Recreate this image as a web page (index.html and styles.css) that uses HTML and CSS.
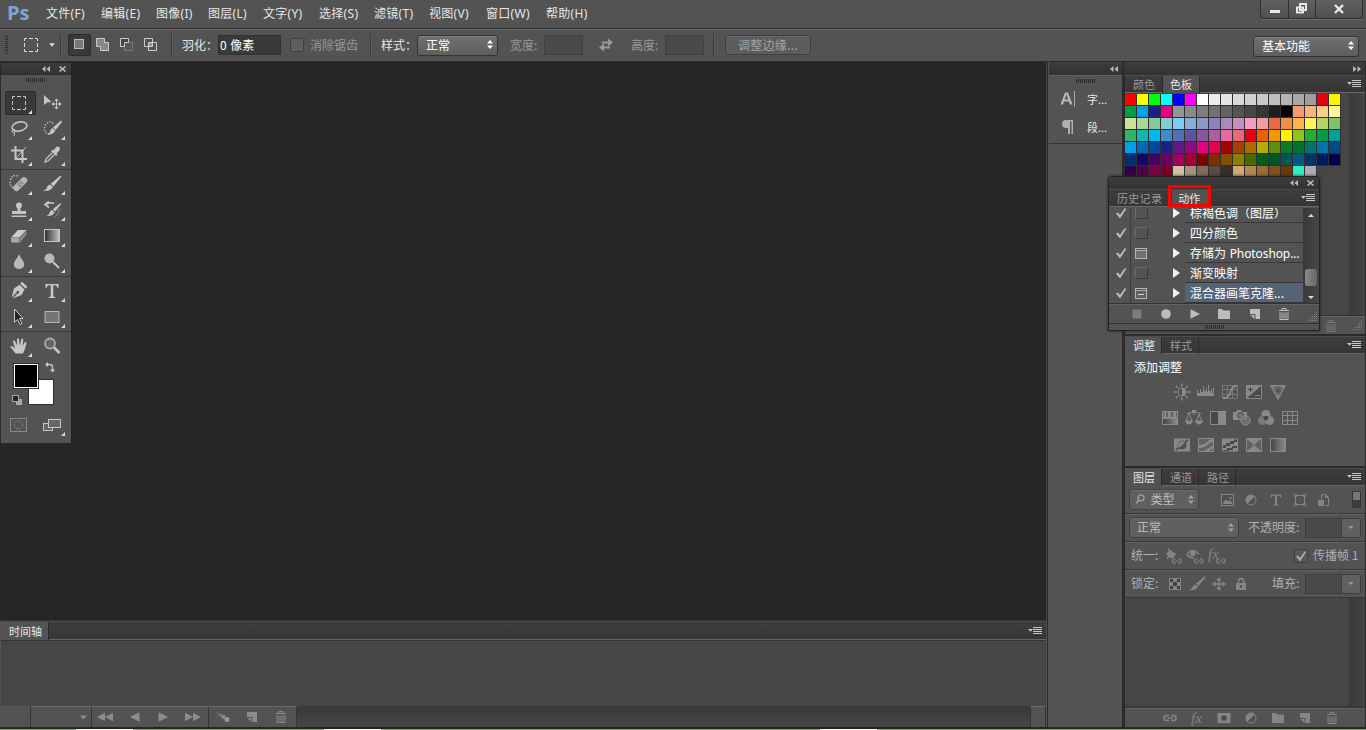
FILE: index.html
```html
<!DOCTYPE html>
<html lang="zh-CN">
<head>
    <meta charset="UTF-8">
    <meta name="viewport" content="width=device-width, initial-scale=1.0">
    <title>Photoshop</title>
    <link rel="stylesheet" href="styles.css">
</head>
<body>
    <!-- 图标 -->
    <svg class="defs" width="0" height="0">
        <defs>
            <linearGradient id="gradH"><stop offset="0" stop-color="#2c2c2c"/><stop offset="1" stop-color="#c4c4c4"/></linearGradient>
            <linearGradient id="gradDim"><stop offset="0" stop-color="#444"/><stop offset="1" stop-color="#8c8c8c"/></linearGradient>
            <radialGradient id="gradR" cy=".35"><stop offset="0" stop-color="#4c4c4c"/><stop offset="1" stop-color="#8c8c8c"/></radialGradient>
        </defs>
        <!-- 工具 -->
        <symbol id="marquee" viewBox="0 0 20 20"><path d="M3.500 6V3.500H6M8 3.500h4M14 3.500h2.500V6M16.500 8v4M16.500 14v2.500H14M12 16.500H8M6 16.500H3.500V14M3.500 12V8" fill="none" stroke="currentColor"/></symbol>
        <symbol id="move" viewBox="0 0 20 20"><path d="M2 2v10l3-2.500L9.500 9z" fill="currentColor"/><path d="M14.500 6.500v9M10 11h9" stroke="currentColor"/><path d="M14.500 5.500l2.200 2.500h-4.400zM14.500 16.500l2.200-2.500h-4.400zM9.500 11l2.500-2.200v4.400zM19.500 11L17 8.800v4.400z" fill="currentColor"/></symbol>
        <symbol id="lasso" viewBox="0 0 20 20"><ellipse cx="10.500" cy="7.500" rx="7.500" ry="4.500" transform="rotate(-12 10.500 7.500)" fill="none" stroke="currentColor" stroke-width="1.600"/><circle cx="4.500" cy="12" r="1.600" fill="none" stroke="currentColor"/><path d="M5 13.500q1.500 1.500-.5 3.500" fill="none" stroke="currentColor"/></symbol>
        <symbol id="quicksel" viewBox="0 0 20 20"><path d="M11 4.500Q9 2 6 3.500 2.500 5.500 2.500 9.500T6 15h2" fill="none" stroke="currentColor" stroke-width="1.300" stroke-dasharray="1.300 1.500"/><path d="M19 1.500L11 8.500l2.500 2.500 6.500-8zM10.500 9l2.800 2.800q-2.500 4.500-8.300 3.500 3-.5 3.300-3.500.7-2.300 2.200-2.800z" fill="currentColor"/></symbol>
        <symbol id="crop" viewBox="0 0 20 20"><path d="M6.500 1v13H18M2 5.500h11.500V18" fill="none" stroke="currentColor" stroke-width="2"/><path d="M6.500 14L17 2" stroke="currentColor"/></symbol>
        <symbol id="dropper" viewBox="0 0 20 20"><path d="M10 8L4 14l-1 3 3-1 6-6" fill="none" stroke="currentColor" stroke-width="1.300"/><path d="M9 6l5 5 1.500-1.500-1-1L17 6q2-3-.5-4.200Q14.500 1 13 3.500L11.500 5.500l-1-1z" fill="currentColor"/></symbol>
        <symbol id="heal" viewBox="0 0 20 20"><path d="M9 2Q3 0 1.500 6t3 8" fill="none" stroke="currentColor" stroke-width="1.400" stroke-dasharray="1.400 1.400"/><rect x="2.500" y="7" width="17" height="6.500" rx="3" transform="rotate(-45 11 10)" fill="#b4b4b4"/><path d="M8 9.500l4 4M11 6.500l4 4" stroke="#7a7a7a"/><path d="M9.500 9.800h1M12 9.800h1M10.700 11.500h1M10.700 8h1" stroke="#555"/></symbol>
        <symbol id="brush" viewBox="0 0 20 20"><path d="M18.500 1.500L8.800 9.800l2.600 2.600 8-9.700zM8.200 10.500l2.800 2.700q-3.500 4.800-10 3.300 3.500-.8 4-3.500 1-2.200 3.200-2.500z" fill="currentColor"/></symbol>
        <symbol id="stamp" viewBox="0 0 20 20"><path d="M7 5.500a3 3 0 1 1 6 0q0 1.500-1.500 3V11H17v3H3v-3h5.500V8.500Q7 7 7 5.500zM2.500 15.500h15V17h-15z" fill="currentColor"/></symbol>
        <symbol id="history" viewBox="0 0 20 20"><path d="M18.500 3L10.800 9.200l2.400 2.400 6-7.500zM10.200 10l2.500 2.500q-3 4.400-8.200 3.400 2.500-.8 3-3.200 1-2.400 2.700-2.700z" fill="currentColor"/><path d="M4 4.500q4-3 8-1M7 1.500l-4 3 4 3" fill="none" stroke="currentColor" stroke-width="1.600"/><path d="M16.500 9q1 3-.5 5-1.500 2-4 2.500" fill="none" stroke="currentColor" stroke-dasharray="1.200 1.200"/></symbol>
        <symbol id="eraser" viewBox="0 0 20 20"><path d="M2 11.500L9 4h8.500l-7 7.500z" fill="#ccc"/><path d="M2 12h8.500v4.500H3.500Q2 16.500 2 15z" fill="#a8a8a8"/><path d="M11 12l6.500-7v3.500l-6.500 8z" fill="#8a8a8a"/></symbol>
        <symbol id="gradient" viewBox="0 0 20 20"><rect x="2.500" y="3.500" width="15" height="12" fill="url(#gradH)" stroke="currentColor"/></symbol>
        <symbol id="drop" viewBox="0 0 20 20"><path d="M10 2q1 3 3.500 6t1.500 6q-1.500 3-5 3t-5-3q-1-3 1.500-6T10 2z" fill="#b8b8b8"/></symbol>
        <symbol id="dodge" viewBox="0 0 20 20"><circle cx="7.500" cy="6.500" r="5" fill="#b8b8b8"/><path d="M11 10l6 6" stroke="currentColor" stroke-width="2"/></symbol>
        <symbol id="pen" viewBox="0 0 20 20"><path d="M13 .8l5.500 5-1.800 2-5.500-5zM10.500 3.800l5 4.700-3 5.500L3.500 17.500l5-5a1.400 1.400 0 1 0-1-1L2.500 16.500 5 7.500z" fill="currentColor"/></symbol>
        <symbol id="type" viewBox="0 0 20 20"><path d="M3.500 3h13v4h-1q-.3-2.700-2.500-2.700h-1.700V15q0 1 2 1v1H6.700v-1q2 0 2-1V4.300H7Q4.800 4.300 4.500 7h-1z" fill="currentColor"/></symbol>
        <symbol id="select" viewBox="0 0 20 20"><path d="M5.500 2v13l3-2.500 2.500 5 2-1-2.500-5H14z" fill="#262626" stroke="currentColor"/></symbol>
        <symbol id="rect" viewBox="0 0 20 20"><rect x="3" y="4.500" width="14" height="11" fill="#757575" stroke="#b5b5b5"/></symbol>
        <symbol id="hand" viewBox="0 0 20 20"><path d="M6.500 17.500L1.500 11Q1.500 9.500 3 10l3 2.500L4 5q.5-1.500 1.800-.2L8 9.500 8 3q1-1.500 2 0l.5 6.500L12.500 3q1.500-1 1.800.5L13.500 10 16 6q1.500-.5 1.500 1L16 13l-2 4.500z" fill="currentColor"/></symbol>
        <symbol id="zoomtool" viewBox="0 0 20 20"><circle cx="8" cy="7.500" r="5" fill="#666" stroke="#aaa" stroke-width="1.800"/><path d="M12 11.500l5.500 5.500" stroke="currentColor" stroke-width="2.600"/></symbol>
        <symbol id="quickmask" viewBox="0 0 20 20"><rect x="1.500" y="3.500" width="16" height="13" fill="none" stroke="#888"/><circle cx="9.500" cy="10" r="4" fill="none" stroke="#aaa" stroke-dasharray="1 1.400"/></symbol>
        <symbol id="screen" viewBox="0 0 20 20"><rect x="1.500" y="8.500" width="9" height="7" fill="#666" stroke="currentColor"/><rect x="6.500" y="4.500" width="12" height="8" fill="#666" stroke="currentColor"/></symbol>
        <symbol id="swapcolor" viewBox="0 0 12 12"><path d="M3 3.500h3Q8.500 3.500 8.500 6v3" fill="none" stroke="currentColor" stroke-width="1.300"/><path d="M1 3.500L4 .8v5.400zM8.500 11.500L5.800 8.500h5.400z" fill="currentColor"/></symbol>
        <!-- 选项栏 -->
        <symbol id="selnew" viewBox="0 0 14 14"><rect x="1.500" y=".5" width="9" height="9" fill="#777" stroke="#bbb"/></symbol>
        <symbol id="seladd" viewBox="0 0 14 14"><path d="M.5.500h8v4h4v8h-8v-4h-4z" fill="#888" stroke="#ccc"/></symbol>
        <symbol id="selsub" viewBox="0 0 14 14"><rect x="4.500" y="4.500" width="8" height="8" fill="#555" stroke="#777"/><path d="M.5.500h8v4h-4v4h-4z" fill="#444" stroke="#ccc"/></symbol>
        <symbol id="selint" viewBox="0 0 14 14"><path d="M.5.500h8v8h-8zM4.500 4.500h8v8h-8z" fill="none" stroke="#ccc"/><path d="M5 5h3v3H5z" fill="#999"/></symbol>
        <symbol id="swap" viewBox="0 0 14 14"><path d="M3 3.500h6V.5l5 4L9 8.500v-3H3zM11 8.500H5v-3L0 9.500l5 4v-3h6z" fill="currentColor"/></symbol>
        <symbol id="updown" viewBox="0 0 6 9"><path d="M3 0l3 3.500H0zM3 9l3-3.500H0z" fill="currentColor"/></symbol>
        <symbol id="down" viewBox="0 0 7 4"><path d="M0 0h7L3.500 4z" fill="currentColor"/></symbol>
        <symbol id="left2" viewBox="0 0 8 6"><path d="M3.500 0v6L0 3zM8 0v6L4.500 3z" fill="currentColor"/></symbol>
        <symbol id="right2" viewBox="0 0 8 6"><path d="M0 0v6l3.500-3zM4.500 0v6L8 3z" fill="currentColor"/></symbol>
        <symbol id="close" viewBox="0 0 7 6"><path d="M.5.500l6 5M6.500.500l-6 5" stroke="currentColor" stroke-width="1.600"/></symbol>
        <symbol id="menu" viewBox="0 0 14 8"><path d="M0 2h5L2.500 4.800z" fill="currentColor"/><path d="M5 .5h9M5 2.500h9M5 4.500h9M5 6.500h9" stroke="currentColor"/></symbol>
        <symbol id="resize" viewBox="0 0 10 10"><path d="M8 0h1v1H8zM6 2h1v1H6zM8 2h1v1H8zM4 4h1v1H4zM6 4h1v1H6zM8 4h1v1H8zM2 6h1v1H2zM4 6h1v1H4zM6 6h1v1H6zM8 6h1v1H8zM0 8h1v1H0zM2 8h1v1H2zM4 8h1v1H4zM6 8h1v1H6zM8 8h1v1H8z" fill="#858585"/></symbol>
        <!-- 面板 -->
        <symbol id="charpanel" viewBox="0 0 16 18"><path d="M.5 14.500L5 2.500h3l4.500 12h-2.600l-1-3H4l-1 3zM4.700 9.500h3.500L6.500 4.500z" fill="#b8b8b8"/><path d="M14.500 1v16" stroke="#aaa"/></symbol>
        <symbol id="parapanel" viewBox="0 0 16 18"><path d="M6 2h7v14h-1.500V3.500H10V16H8V10H6Q2 10 2 6t4-4z" fill="#b0b0b0"/></symbol>
        <symbol id="folder" viewBox="0 0 14 12"><path d="M1 1h4l1 1.500h7V11H1z" fill="currentColor"/></symbol>
        <symbol id="newitem" viewBox="0 0 14 12"><path d="M2 1h10v10H7.500V6H2zM2.500 7h4v4z" fill="currentColor"/></symbol>
        <symbol id="trash" viewBox="0 0 14 12"><path d="M2 2.500h10M5 2V.5h4V2M3 4v7.500h8V4M5 4.500v6M7 4.500v6M9 4.500v6" fill="none" stroke="currentColor"/></symbol>
        <symbol id="stop" viewBox="0 0 14 12"><path d="M2.500 1.500h9v9h-9z" fill="#7c7c7c"/></symbol>
        <symbol id="record" viewBox="0 0 14 12"><circle cx="7" cy="6" r="4.800" fill="currentColor"/></symbol>
        <symbol id="play" viewBox="0 0 14 12"><path d="M2.500 1.200L12 6l-9.500 4.800z" fill="currentColor"/></symbol>
        <symbol id="back" viewBox="0 0 14 12"><path d="M11.500 1.200L2 6l9.500 4.800z" fill="currentColor"/></symbol>
        <symbol id="first" viewBox="0 0 16 12"><path d="M8 1.800v8.400L0 6zM16 1.800v8.400L8 6z" fill="currentColor"/></symbol>
        <symbol id="last" viewBox="0 0 16 12"><path d="M0 1.800v8.400L8 6zM8 1.800v8.400L16 6z" fill="currentColor"/></symbol>
        <symbol id="tween" viewBox="0 0 14 12"><circle cx="2" cy="2.500" r="1.500" fill="#666"/><circle cx="4.500" cy="4" r="1.800" fill="#777"/><circle cx="7.500" cy="6" r="2.200" fill="#888"/><circle cx="11" cy="8.500" r="2.500" fill="#999"/></symbol>
        <symbol id="check" viewBox="0 0 12 12"><path d="M1 6.500l2-1 2 2.500L9.500 1.500h2L5.300 11H4.500z" fill="currentColor"/></symbol>
        <symbol id="tri" viewBox="0 0 7 10"><path d="M0 0l7 5-7 5z" fill="#f0f0f0"/></symbol>
        <!-- 调整 -->
        <symbol id="sun" viewBox="0 0 18 18"><path d="M9 .5v3M9 14.500v3M.5 9h3M14.500 9h3M3 3l2 2M13 13l2 2M15 3l-2 2M5 13l-2 2" stroke="currentColor" stroke-width="1.600"/><circle cx="9" cy="9" r="4" fill="#4d4d4d" stroke="currentColor"/><path d="M9 5a4 4 0 0 1 0 8z" fill="currentColor"/></symbol>
        <symbol id="levels" viewBox="0 0 18 18"><path d="M0 13V7h1v3h2V6h1v3h2V3h1v5h2V5h1v4h1V2h1v6h2V6h1v4h1V5h1v8z" fill="currentColor"/></symbol>
        <symbol id="curves" viewBox="0 0 18 18"><path d="M1.500 2.500h15v13h-15zM6.500 2.500v13M11.500 2.500v13M1.500 6.500h15M1.500 11.500h15" fill="none" stroke="#777"/><path d="M2 15q6 0 7.500-6T16 3" fill="none" stroke="#999" stroke-width="1.300"/></symbol>
        <symbol id="exposure" viewBox="0 0 18 18"><rect x="1.500" y="2.500" width="15" height="13" fill="#4a4a4a" stroke="currentColor"/><path d="M1.500 15.500v-13h15z" fill="currentColor"/><path d="M5.500 4v5M3 6.500h5" stroke="#444"/><path d="M10 12.500h5" stroke="currentColor"/></symbol>
        <symbol id="vibrance" viewBox="0 0 18 18"><path d="M1.500 2.500h15L9 16.500z" fill="url(#gradR)" stroke="currentColor"/></symbol>
        <symbol id="huesat" viewBox="0 0 18 18"><rect x="1.500" y="2.500" width="15" height="13" fill="#606060" stroke="currentColor"/><path d="M3 3h2v5H3zM7 3h3v5H7zM12 3h3v5h-3zM2 8h14v2H2z" fill="currentColor"/><path d="M2 10h14v5H2z" fill="url(#gradDim)"/></symbol>
        <symbol id="balance" viewBox="0 0 18 18"><path d="M9 1v5M2 4.500q7-3 14 0M4 4l-3 8M4 4l3 8M14 5l-3 8M14 5l3 8" fill="none" stroke="currentColor"/><path d="M0 11.500h8q-1 4-4 4t-4-4zM10 11.500h8q-1 4-4 4t-4-4zM7 1h4v3H7z" fill="currentColor"/></symbol>
        <symbol id="bw" viewBox="0 0 18 18"><rect x="1.500" y="2.500" width="15" height="13" fill="#484848" stroke="currentColor"/><path d="M9 3h7v12H9z" fill="currentColor"/></symbol>
        <symbol id="photo" viewBox="0 0 18 18"><path d="M0 3h3l1-2h4l1 2h5v8H0z" fill="currentColor"/><circle cx="7.500" cy="6.500" r="2.800" fill="#777" stroke="#454545"/><circle cx="12.500" cy="11.500" r="4.700" fill="#777" fill-opacity=".8" stroke="#909090"/></symbol>
        <symbol id="mixer" viewBox="0 0 18 18"><circle cx="9" cy="5.500" r="4.500" fill="#888"/><circle cx="5.500" cy="11.500" r="4.500" fill="#787878"/><circle cx="12.500" cy="11.500" r="4.500" fill="#888"/><path d="M6 7.500q3-1 6 0-1 3-3 4.500-2-1.500-3-4.500z" fill="#444"/></symbol>
        <symbol id="lookup" viewBox="0 0 18 18"><path d="M1.500 2.500h15v13h-15zM6.500 2.500v13M11.500 2.500v13M1.500 6.500h15M1.500 11.500h15" fill="none" stroke="currentColor"/></symbol>
        <symbol id="invert" viewBox="0 0 18 18"><rect x="1" y="2.500" width="16" height="13" fill="currentColor"/><path d="M3 14L15 4" stroke="#505050" stroke-width="2"/><circle cx="9" cy="9" r="4.500" fill="#505050"/><path d="M6 12a4 4 0 0 1 6-5.500z" fill="#858585"/></symbol>
        <symbol id="poster" viewBox="0 0 18 18"><rect x="1.500" y="2.500" width="15" height="13" fill="#626262" stroke="currentColor"/><path d="M2 9q5 0 8-3t6-3v3q-3 0-6 3t-8 3zM6 15q4-1 6-3t4-2v3q-2 0-4 2z" fill="currentColor"/></symbol>
        <symbol id="threshold" viewBox="0 0 18 18"><rect x="1" y="2.500" width="16" height="13" fill="currentColor"/><path d="M2 9h3V7h4V5h4V3.500h3V6h-3v2H9v2H5v2H2zM2 14h4v-2h5v-2h5v2h-4v2H8v1H2z" fill="#484848"/></symbol>
        <symbol id="selcolor" viewBox="0 0 18 18"><rect x="1.500" y="2.500" width="15" height="13" fill="#606060" stroke="currentColor"/><path d="M2 3h14L9 9zM2 15h14L9 9z" fill="#888"/></symbol>
        <symbol id="gradmap" viewBox="0 0 18 18"><rect x="1.500" y="2.500" width="15" height="13" fill="url(#gradDim)" stroke="currentColor"/></symbol>
        <!-- 图层 -->
        <symbol id="search" viewBox="0 0 10 10"><circle cx="6" cy="3.800" r="3" fill="none" stroke="currentColor" stroke-width="1.300"/><path d="M4 6L1 9.500" stroke="currentColor" stroke-width="1.500"/></symbol>
        <symbol id="picture" viewBox="0 0 14 14"><rect x=".5" y="1.500" width="12" height="11" fill="#4e4e4e" stroke="currentColor"/><path d="M2 10l3-3.500L7 8.500l2-1.500 2.500 3v1H2zM8.500 4h2v2h-2z" fill="currentColor"/></symbol>
        <symbol id="adj" viewBox="0 0 14 14"><circle cx="7" cy="7" r="5" fill="#505050" stroke="currentColor"/><path d="M3.300 10.700A5.200 5.200 0 0 1 10.700 3.300z" fill="currentColor"/></symbol>
        <symbol id="shape" viewBox="0 0 14 14"><path d="M3 2.500h8M3 11.500h8M2.500 3v9M11.500 3v9" stroke="currentColor"/><path d="M1.500 1.500h2v2h-2zM10.500 1.500h2v2h-2zM1.500 10.500h2v2h-2zM10.500 10.500h2v2h-2z" fill="#535353" stroke="currentColor"/></symbol>
        <symbol id="smart" viewBox="0 0 14 14"><path d="M4.500 6.500v-5h4l3 3v8H8" fill="none" stroke="currentColor"/><path d="M8 1v4h4M1 7h6v6H1z" fill="currentColor"/></symbol>
        <symbol id="pin" viewBox="0 0 18 18"><path d="M4 1l6 5 2 0-1 3-3 3-2-2-4 3 2-4.500-2.500-2 3-1.500z" fill="currentColor"/><path d="M12 12h-1.500a2 2 0 0 0 0 4H12M14 12h1a2 2 0 0 1 0 4h-1M11 14h4" fill="none" stroke="currentColor" stroke-width="1.200"/></symbol>
        <symbol id="eye" viewBox="0 0 18 18"><path d="M1 7.500Q6.500-.5 13 7.500M1 7.500q3 4 7 3.500" fill="none" stroke="currentColor" stroke-width="1.400"/><circle cx="7" cy="6.500" r="2.700" fill="currentColor"/><path d="M12 12h-1.500a2 2 0 0 0 0 4H12M14 12h1a2 2 0 0 1 0 4h-1M11 14h4" fill="none" stroke="currentColor" stroke-width="1.200"/></symbol>
        <symbol id="chainlet" viewBox="0 0 18 18"><path d="M12 12h-1.500a2 2 0 0 0 0 4H12M14 12h1a2 2 0 0 1 0 4h-1M11 14h4" fill="none" stroke="currentColor" stroke-width="1.200"/></symbol>
        <symbol id="checker" viewBox="0 0 14 14"><rect x="1.500" y="1.500" width="11" height="11" fill="#3f3f3f" stroke="currentColor"/><path d="M5 2h4v3H5zM2 5h3v4H2zM9 5h3v4H9zM5 9h4v3H5z" fill="currentColor"/></symbol>
        <symbol id="cross" viewBox="0 0 14 14"><path d="M7 2v10M2 7h10" stroke="currentColor" stroke-width="1.300"/><path d="M7 0l2.800 3.500H4.200zM7 14l2.800-3.500H4.200zM0 7l3.500-2.800v5.600zM14 7l-3.500-2.800v5.600z" fill="currentColor"/></symbol>
        <symbol id="lock" viewBox="0 0 14 14"><path d="M4.500 6V4a2.500 2.500 0 0 1 5 0v2" fill="none" stroke="currentColor" stroke-width="1.500"/><path d="M2 6h10v7H2z" fill="currentColor"/><path d="M6.300 8h1.400v3H6.300z" fill="#444"/></symbol>
        <symbol id="link" viewBox="0 0 14 12"><path d="M6 3.500H3.500a2.500 2.500 0 0 0 0 5H6M8 3.500h2.500a2.500 2.500 0 0 1 0 5H8M4 6h6" fill="none" stroke="currentColor" stroke-width="1.600"/></symbol>
        <symbol id="mask" viewBox="0 0 14 12"><path d="M.5 1h13v10H.5z" fill="currentColor"/><circle cx="7" cy="6" r="2.700" fill="#4a4a4a"/></symbol>
    </svg>

    <div class="app">
        <header class="menubar">
            <div class="logo">Ps</div>
            <nav class="menus">
                <span>文件(F)</span>
                <span>编辑(E)</span>
                <span>图像(I)</span>
                <span>图层(L)</span>
                <span>文字(Y)</span>
                <span>选择(S)</span>
                <span>滤镜(T)</span>
                <span>视图(V)</span>
                <span>窗口(W)</span>
                <span>帮助(H)</span>
            </nav>
            <div class="winbtns">
                <div class="winbtn"><svg width="12" height="12"><path d="M1 9h10v3H1z" fill="#e8e8e8"/></svg></div>
                <div class="winbtn"><svg width="14" height="12"><path d="M5 1h6v6H5zM2 4.500h6v5H2z" fill="#555" stroke="#e8e8e8" stroke-width="2"/></svg></div>
                <div class="winbtn winbtn-close"><svg width="12" height="10"><path d="M2 1l8 8M10 1L2 9" stroke="#e8e8e8" stroke-width="2.400"/></svg></div>
            </div>
        </header>

        <div class="options">
            <span class="vgrip"></span>
            <svg class="light" width="20" height="20"><use href="#marquee"/></svg>
            <svg class="light" width="6" height="4"><use href="#down"/></svg>
            <span class="divider"></span>
            <div class="selmodes">
                <span class="mode pressed"><svg width="14" height="14"><use href="#selnew"/></svg></span>
                <svg width="14" height="14"><use href="#seladd"/></svg>
                <svg width="14" height="14"><use href="#selsub"/></svg>
                <svg width="14" height="14"><use href="#selint"/></svg>
            </div>
            <span class="divider"></span>
            <span class="label">羽化：</span>
            <span class="input feather">0 像素</span>
            <span class="checkbox"></span>
            <span class="label off">消除锯齿</span>
            <span class="divider"></span>
            <span class="label">样式：</span>
            <span class="dropdown style-select">正常<svg width="6" height="9"><use href="#updown"/></svg></span>
            <span class="label off">宽度:</span>
            <span class="input off"></span>
            <svg class="off" width="14" height="14"><use href="#swap"/></svg>
            <span class="label off">高度:</span>
            <span class="input off"></span>
            <span class="divider"></span>
            <span class="refine">调整边缘...</span>
            <span class="dropdown workspace">基本功能<svg width="6" height="9"><use href="#updown"/></svg></span>
        </div>

        <main class="main">
            <div class="center">
                <div class="canvas"></div>
                <section class="timeline">
                    <div class="tabs">
                        <span class="tab active">时间轴</span>
                        <svg class="panel-menu" width="14" height="8"><use href="#menu"/></svg>
                    </div>
                    <div class="timeline-body"></div>
                    <div class="timeline-bar">
                        <div class="tl-cell tl-blank"></div>
                        <div class="tl-cell tl-loop"><svg width="7" height="5"><use href="#down"/></svg></div>
                        <div class="tl-cell tl-play">
                            <svg width="16" height="12"><use href="#first"/></svg>
                            <svg width="14" height="12"><use href="#back"/></svg>
                            <svg width="14" height="12"><use href="#play"/></svg>
                            <svg width="16" height="12"><use href="#last"/></svg>
                        </div>
                        <div class="tl-cell tl-tools">
                            <svg width="14" height="12"><use href="#tween"/></svg>
                            <svg width="14" height="12"><use href="#newitem"/></svg>
                            <svg width="14" height="12"><use href="#trash"/></svg>
                        </div>
                        <div class="tl-scroll"></div>
                        <div class="tl-cell tl-end"></div>
                    </div>
                </section>
            </div>

            <aside class="dock">
                <div class="dock-head"><svg width="8" height="6"><use href="#left2"/></svg></div>
                <div class="dock-group">
                    <span class="grip"></span>
                    <div class="dock-item"><svg width="16" height="18"><use href="#charpanel"/></svg><span>字...</span></div>
                    <div class="dock-item"><svg width="16" height="18"><use href="#parapanel"/></svg><span>段...</span></div>
                </div>
            </aside>

            <aside class="panels">
                <div class="dock-head"><svg width="8" height="6"><use href="#right2"/></svg></div>

                <section class="panel swatch-panel">
                    <div class="tabs">
                        <span class="tab">颜色</span>
                        <span class="tab active">色板</span>
                        <svg class="panel-menu" width="14" height="8"><use href="#menu"/></svg>
                    </div>
                    <div class="swatch-body">
                        <div class="swatches" id="swatches"></div>
                        <div class="scroll"></div>
                    </div>
                    <div class="swatch-foot">
                        <svg width="14" height="12"><use href="#trash"/></svg>
                        <svg width="10" height="10"><use href="#resize"/></svg>
                    </div>
                </section>

                <section class="panel adjust-panel">
                    <div class="tabs">
                        <span class="tab active">调整</span>
                        <span class="tab">样式</span>
                        <svg class="panel-menu" width="14" height="8"><use href="#menu"/></svg>
                    </div>
                    <div class="adjust-body">
                        <div class="adjust-title">添加调整</div>
                        <div class="adjust-row row1">
                            <svg><use href="#sun"/></svg><svg><use href="#levels"/></svg><svg><use href="#curves"/></svg><svg><use href="#exposure"/></svg><svg><use href="#vibrance"/></svg>
                        </div>
                        <div class="adjust-row row2">
                            <svg><use href="#huesat"/></svg><svg><use href="#balance"/></svg><svg><use href="#bw"/></svg><svg><use href="#photo"/></svg><svg><use href="#mixer"/></svg><svg><use href="#lookup"/></svg>
                        </div>
                        <div class="adjust-row row3">
                            <svg><use href="#invert"/></svg><svg><use href="#poster"/></svg><svg><use href="#threshold"/></svg><svg><use href="#selcolor"/></svg><svg><use href="#gradmap"/></svg>
                        </div>
                    </div>
                </section>

                <section class="panel layers-panel">
                    <div class="tabs">
                        <span class="tab active">图层</span>
                        <span class="tab">通道</span>
                        <span class="tab">路径</span>
                        <svg class="panel-menu" width="14" height="8"><use href="#menu"/></svg>
                    </div>
                    <div class="lrow filter-row">
                        <span class="dropdown off"><svg class="lead" width="10" height="10"><use href="#search"/></svg>类型<svg width="6" height="9"><use href="#updown"/></svg></span>
                        <svg width="14" height="14"><use href="#picture"/></svg>
                        <svg width="14" height="14"><use href="#adj"/></svg>
                        <svg width="16" height="16"><use href="#type"/></svg>
                        <svg width="14" height="14"><use href="#shape"/></svg>
                        <svg width="14" height="14"><use href="#smart"/></svg>
                        <span class="switch"></span>
                    </div>
                    <div class="lrow blend-row">
                        <span class="dropdown off">正常<svg width="6" height="9"><use href="#updown"/></svg></span>
                        <span class="label">不透明度:</span>
                        <span class="combo"><i></i><b><svg width="6" height="3"><use href="#down"/></svg></b></span>
                    </div>
                    <div class="lrow unify-row">
                        <span class="label">统一:</span>
                        <svg width="18" height="18"><use href="#pin"/></svg>
                        <svg width="18" height="18"><use href="#eye"/></svg>
                        <span class="fxlink"><em>fx</em><svg width="18" height="18"><use href="#chainlet"/></svg></span>
                        <span class="checkbox"><svg width="12" height="12"><use href="#check"/></svg></span>
                        <span class="label">传播帧 1</span>
                    </div>
                    <div class="lrow lock-row">
                        <span class="label">锁定:</span>
                        <svg width="14" height="14"><use href="#checker"/></svg>
                        <svg width="18" height="18"><use href="#brush"/></svg>
                        <svg width="14" height="14"><use href="#cross"/></svg>
                        <svg width="14" height="14"><use href="#lock"/></svg>
                        <span class="label">填充:</span>
                        <span class="combo"><i></i><b><svg width="6" height="3"><use href="#down"/></svg></b></span>
                    </div>
                    <div class="layer-list">
                        <div class="scroll"></div>
                    </div>
                    <div class="layer-foot">
                        <svg width="14" height="12"><use href="#link"/></svg>
                        <em>fx</em>
                        <svg width="14" height="12"><use href="#mask"/></svg>
                        <svg width="14" height="14"><use href="#adj"/></svg>
                        <svg width="14" height="12"><use href="#folder"/></svg>
                        <svg width="14" height="12"><use href="#newitem"/></svg>
                        <svg width="14" height="12"><use href="#trash"/></svg>
                    </div>
                </section>
            </aside>
        </main>
        <div class="taskbar"></div>

        <!-- 浮动工具箱 -->
        <div class="toolbox">
            <div class="float-head">
                <svg width="8" height="6"><use href="#left2"/></svg>
                <svg width="7" height="6"><use href="#close"/></svg>
            </div>
            <span class="grip"></span>
            <div class="tools">
                <span class="tool pressed"><svg><use href="#marquee"/></svg></span>
                <span class="tool single"><svg><use href="#move"/></svg></span>
                <span class="tool"><svg><use href="#lasso"/></svg></span>
                <span class="tool"><svg><use href="#quicksel"/></svg></span>
                <span class="tool"><svg><use href="#crop"/></svg></span>
                <span class="tool"><svg><use href="#dropper"/></svg></span>
            </div>
            <div class="tools">
                <span class="tool"><svg><use href="#heal"/></svg></span>
                <span class="tool"><svg><use href="#brush"/></svg></span>
                <span class="tool"><svg><use href="#stamp"/></svg></span>
                <span class="tool"><svg><use href="#history"/></svg></span>
                <span class="tool"><svg><use href="#eraser"/></svg></span>
                <span class="tool"><svg><use href="#gradient"/></svg></span>
                <span class="tool"><svg><use href="#drop"/></svg></span>
                <span class="tool"><svg><use href="#dodge"/></svg></span>
            </div>
            <div class="tools">
                <span class="tool"><svg><use href="#pen"/></svg></span>
                <span class="tool"><svg><use href="#type"/></svg></span>
                <span class="tool"><svg><use href="#select"/></svg></span>
                <span class="tool"><svg><use href="#rect"/></svg></span>
            </div>
            <div class="tools">
                <span class="tool"><svg><use href="#hand"/></svg></span>
                <span class="tool single"><svg><use href="#zoomtool"/></svg></span>
            </div>
            <div class="colors">
                <span class="bg-color"></span>
                <span class="fg-color"></span>
                <svg class="swap-color" width="12" height="12"><use href="#swapcolor"/></svg>
                <svg class="default-color" width="11" height="11"><path d="M4 4h6v6H4z" fill="#aaa"/><path d="M.5.500h6v6h-6z" fill="#222" stroke="#aaa"/></svg>
            </div>
            <div class="tools">
                <span class="tool single"><svg><use href="#quickmask"/></svg></span>
                <span class="tool"><svg><use href="#screen"/></svg></span>
            </div>
        </div>

        <!-- 浮动动作面板 -->
        <div class="actions">
            <div class="float-head">
                <svg width="8" height="6"><use href="#left2"/></svg>
                <svg width="7" height="6"><use href="#close"/></svg>
            </div>
            <div class="tabs">
                <span class="tab">历史记录</span>
                <span class="tab active">动作</span>
                <svg class="panel-menu" width="14" height="8"><use href="#menu"/></svg>
            </div>
            <div class="actions-body">
                <div class="action-list">
                    <div class="action"><svg width="12" height="12"><use href="#check"/></svg><span class="dlg"><i></i></span><svg width="7" height="10"><use href="#tri"/></svg><span class="name">棕褐色调（图层）</span></div>
                    <div class="action"><svg width="12" height="12"><use href="#check"/></svg><span class="dlg"><i></i></span><svg width="7" height="10"><use href="#tri"/></svg><span class="name">四分颜色</span></div>
                    <div class="action"><svg width="12" height="12"><use href="#check"/></svg><span class="dlg"><i class="full"></i></span><svg width="7" height="10"><use href="#tri"/></svg><span class="name">存储为 <span class="latin">Photoshop...</span></span></div>
                    <div class="action"><svg width="12" height="12"><use href="#check"/></svg><span class="dlg"><i></i></span><svg width="7" height="10"><use href="#tri"/></svg><span class="name">渐变映射</span></div>
                    <div class="action"><svg width="12" height="12"><use href="#check"/></svg><span class="dlg"><i class="full part"></i></span><svg width="7" height="10"><use href="#tri"/></svg><span class="name selected">混合器画笔克隆...</span></div>
                </div>
                <div class="action-scroll">
                    <svg width="6" height="3"><path d="M0 3l3-3 3 3z" fill="#ddd"/></svg>
                    <span class="thumb"></span>
                    <svg width="6" height="3"><path d="M0 0l3 3 3-3z" fill="#ddd"/></svg>
                </div>
            </div>
            <div class="actions-foot">
                <svg width="14" height="12"><use href="#stop"/></svg>
                <svg width="14" height="12"><use href="#record"/></svg>
                <svg width="14" height="12"><use href="#play"/></svg>
                <svg width="14" height="12"><use href="#folder"/></svg>
                <svg class="new" width="14" height="12"><use href="#newitem"/></svg>
                <svg width="14" height="12"><use href="#trash"/></svg>
                <svg class="corner" width="10" height="10"><use href="#resize"/></svg>
            </div>
            <div class="actions-bottom"><span class="grip"></span></div>
        </div>
        <div class="highlight"></div>
    </div>

    <script src="script.js"></script>
</body>
</html>
```
FILE: styles.css
```css
* {
    box-sizing: border-box;
}
body {
    margin: 0;
    background: #262626;
    color: #e6e6e6;
    font-family: "Noto Sans CJK SC", "Liberation Sans", sans-serif;
    font-size: 12px;
    line-height: 16px;
}
svg {
    display: block;
    flex: none;
}
.defs {
    position: absolute;
}
.app {
    position: relative;
    display: flex;
    flex-direction: column;
    width: 1366px;
    height: 730px;
    overflow: hidden;
    background: #535353;
    white-space: nowrap;
}
.light {
    color: #dcdcdc;
}

/* 菜单栏 */
.menubar {
    display: flex;
    flex: none;
    height: 29px;
    border-bottom: 1px solid #2b2b2b;
}
.logo {
    width: 46px;
    padding-left: 7px;
    color: #7aa5d6;
    font: bold 20px/26px "Open Sans", sans-serif;
}
.menus {
    display: grid;
    grid-template-columns: 55px 55px 52px 55px 56px 55px 55px 57px 60px 60px;
    line-height: 28px;
    letter-spacing: 0.3px;
    font-family: "Noto Sans", "Noto Sans CJK SC", sans-serif;
}
.winbtns {
    display: flex;
    height: 19px;
    margin-left: auto;
    margin-right: 3px;
    border: 1px solid #2e2e2e;
    border-top: 0;
    border-radius: 0 0 3px 3px;
    background: linear-gradient(#606060, #505050);
    box-shadow: 0 1px #707070;
}
.winbtn {
    display: flex;
    align-items: center;
    justify-content: center;
    width: 28px;
    border-right: 1px solid #2e2e2e;
}
.winbtn:first-child {
    padding-bottom: 4px;
}
.winbtn:nth-child(2) {
    width: 27px;
}
.winbtn-close {
    width: 46px;
    border-right: 0;
}

/* 选项栏 */
.options {
    display: grid;
    grid-template-columns: 16px 28px 11px 8px 103px 11px 36px 72px 20px 60px 11px 36px 93px 34px 55px 32px 34px 48px 12px 528px 106px;
    align-items: center;
    flex: none;
    height: 33px;
    padding: 0 0 1px 5px;
    border-top: 1px solid #6a6a6a;
    border-bottom: 1px solid #2b2b2b;
}
.options .label {
    padding-bottom: 1px;
}
.options .off {
    color: #999;
}
.vgrip {
    width: 3px;
    height: 20px;
    background: repeating-linear-gradient(#333 0 1px, #535353 1px 2px);
}
.divider {
    width: 2px;
    height: 23px;
    border-left: 1px solid #3a3a3a;
    border-right: 1px solid #5e5e5e;
}
.selmodes {
    display: flex;
    align-items: center;
    gap: 10px;
}
.mode {
    display: flex;
    justify-content: center;
    align-items: center;
    width: 23px;
    height: 22px;
    margin-right: -5px;
    border: 1px solid #2c2c2c;
    border-radius: 2px;
    background: #393939;
    padding: 2px 0 0 1px;
}
.input {
    width: 39px;
    height: 20px;
    padding-left: 1px;
    border: 1px solid #303030;
    background: #3a3a3a;
    color: #fff;
    line-height: 18px;
}
.input.feather {
    width: 63px;
    word-spacing: 1px;
}
.input.off {
    border-color: #424242;
    background: #4a4a4a;
}
.checkbox {
    display: flex;
    align-items: center;
    justify-content: center;
    width: 14px;
    height: 14px;
    border: 1px solid #404040;
    border-radius: 2px;
    background: #5f5f5f;
}
.dropdown {
    display: flex;
    align-items: center;
    justify-content: space-between;
    height: 21px;
    padding: 0 4px 1px 8px;
    border: 1px solid #333;
    border-radius: 3px;
    background: linear-gradient(#707070, #5e5e5e);
    box-shadow: inset 0 1px #808080;
    color: #fff;
}
.style-select {
    width: 81px;
}
.workspace {
    position: relative;
    top: 1px;
}
.refine {
    width: 86px;
    height: 20px;
    border: 1px solid #3e3e3e;
    border-radius: 3px;
    background: #5c5c5c;
    box-shadow: inset 0 1px #6a6a6a;
    color: #a3a3a3;
    line-height: 17px;
    text-align: center;
    letter-spacing: 0.3px;
}

/* 主区域 */
.main {
    display: flex;
    flex: 1;
    min-height: 0;
}
.center {
    display: flex;
    flex-direction: column;
    width: 1048px;
    border-right: 1px solid #2a2a2a;
    background: #535353;
}
.canvas {
    flex: 1;
    border-right: 1px solid #444;
    background: #262626;
}
.tabs {
    display: flex;
    align-items: stretch;
    flex: none;
    height: 18px;
    background: linear-gradient(#3d3d3d, #353535);
    border-top: 1px solid #4c4c4c;
    box-shadow: inset 0 -1px #666;
}
.tab {
    padding: 0 6px 0 8px;
    border-right: 1px solid #2a2a2a;
    color: #989898;
    font-size: 11px;
    line-height: 17px;
}
.tab.active {
    background: #535353;
    color: #e8e8e8;
}
.panel-menu {
    margin: 4px 4px 0 auto;
    color: #c8c8c8;
}
.timeline {
    display: flex;
    flex-direction: column;
    height: 107px;
    padding: 0 1px;
    border-top: 1px solid #333;
}
.timeline .tabs {
    height: 19px;
}
.timeline .tab {
    line-height: 18px;
}
.timeline .panel-menu {
    margin-top: 5px;
}
.timeline-body {
    flex: 1;
    border-top: 1px solid #333;
    background: #464646;
}
.timeline-bar {
    display: flex;
    height: 21px;
}
.tl-cell {
    display: flex;
    align-items: center;
    border-top: 1px solid #6a6a6a;
    border-right: 1px solid #353535;
    background: #535353;
    color: #8c8c8c;
}
.tl-blank {
    width: 30px;
    border-top-color: #535353;
}
.tl-loop {
    width: 61px;
    justify-content: flex-end;
    padding-right: 4px;
}
.tl-play {
    width: 117px;
    padding: 0 7px 0 5px;
    justify-content: space-between;
}
.tl-tools {
    width: 88px;
    gap: 15px;
    padding-left: 7px;
}
.tl-scroll {
    flex: 1;
    background: linear-gradient(#3a3a3a, #474747);
}
.tl-end {
    width: 16px;
    border-left: 1px solid #353535;
}
.taskbar {
    height: 3px;
    flex: none;
    border-top: 2px solid #262626;
    background: linear-gradient(90deg, #8d9c83 0 76px, #f4f4e8 76px 133px, #8d9c83 133px 324px, #f4f4e8 324px 381px, #8d9c83 381px 820px, #f4f4e8 820px 877px, #8d9c83 877px);
}

/* 停靠面板 */
.dock-head {
    display: flex;
    align-items: center;
    justify-content: flex-end;
    flex: none;
    height: 13px;
    padding-right: 4px;
    background: linear-gradient(#3d3d3d, #323232);
    color: #bbb;
}
.dock {
    width: 76px;
    padding-left: 1px;
    border-right: 2px solid #2b2b2b;
}
.dock-group {
    display: flex;
    flex-direction: column;
    height: 69px;
    border-top: 1px solid #626262;
    border-bottom: 1px solid #333;
}
.grip {
    display: block;
    width: 19px;
    height: 4px;
    background: repeating-linear-gradient(90deg, #2c2c2c 0 1px, #535353 1px 2px);
}
.dock-group .grip {
    margin: 3px 0 2px 27px;
}
.dock-item {
    display: flex;
    align-items: center;
    gap: 11px;
    height: 28px;
    padding-left: 11px;
    font-size: 11px;
}
.panels {
    display: flex;
    flex-direction: column;
    width: 242px;
    border-right: 1px solid #2b2b2b;
    background: #2b2b2b;
}
.panel {
    display: flex;
    flex-direction: column;
    margin-left: 1px;
    background: #535353;
}
.swatch-panel {
    height: 259px;
    margin-bottom: 2px;
}
.swatch-panel .tab {
    padding-right: 7px;
}
.swatch-panel .active {
    padding-left: 7px;
}
.swatch-body {
    display: flex;
    justify-content: space-between;
    flex: 1;
    padding-top: 1px;
    background: #464646;
}
.swatches {
    display: grid;
    grid-template-columns: repeat(18, 12px);
    grid-auto-rows: 12px;
    align-content: start;
}
.swatch {
    border: solid #303030;
    border-width: 0 1px 1px 0;
}
.scroll {
    width: 16px;
    background: linear-gradient(90deg, #393939, #454545);
}
.swatch-foot {
    display: flex;
    align-items: center;
    justify-content: flex-end;
    gap: 15px;
    height: 19px;
    padding: 1px 2px 0 0;
    border-top: 1px solid #333;
    box-shadow: inset 0 1px #626262;
    color: #777;
}
.adjust-panel {
    height: 130px;
    margin-bottom: 2px;
}
.adjust-body {
    flex: 1;
    color: #8a8a8a;
}
.adjust-title {
    padding: 5px 0 0 9px;
    color: #fff;
    line-height: 15px;
}
.adjust-row {
    display: flex;
    gap: 6px;
    height: 27px;
    align-items: center;
}
.adjust-row svg {
    width: 18px;
    height: 18px;
}
.row1 {
    padding: 6px 0 0 48px;
    height: 30px;
}
.row2 {
    padding-left: 36px;
}
.row3 {
    padding-left: 48px;
}
.layers-panel {
    flex: 1;
    min-height: 0;
}
.lrow {
    display: grid;
    align-items: center;
    flex: none;
    height: 28px;
    padding: 0 0 1px 4px;
    border-top: 1px solid #626262;
    border-bottom: 1px solid #383838;
    color: #858585;
}
.lrow .label {
    padding-bottom: 1px;
    color: #b0b0b0;
}
.lrow .dropdown {
    background: #606060;
    border-color: #434343;
    box-shadow: inset 0 1px #6a6a6a;
    color: #bdbdbd;
    padding-left: 7px;
}
.lrow .dropdown svg {
    color: #a0a0a0;
}
.dropdown .lead {
    margin: 0 -8px 0 -2px;
}
.filter-row {
    grid-template-columns: 92px 23px 24px 25px 24px 35px 9px;
    border-top-color: #535353;
}
.filter-row .dropdown {
    width: 70px;
}
.switch {
    width: 9px;
    height: 17px;
    border: 1px solid #353535;
    background: linear-gradient(#777 0 8px, #3c3c3c 8px);
}
.blend-row {
    grid-template-columns: 119px 57px 56px;
}
.blend-row .dropdown {
    width: 110px;
}
.combo {
    display: flex;
    width: 56px;
    height: 20px;
    border: 1px solid #3c3c3c;
    border-radius: 0 3px 3px 0;
}
.combo i {
    flex: 1;
    border-right: 1px solid #3c3c3c;
    background: #4a4a4a;
}
.combo b {
    display: flex;
    align-items: center;
    justify-content: center;
    width: 18px;
    background: #606060;
    color: #999;
}
.unify-row {
    grid-template-columns: 35px 22px 22px 86px 18px 48px;
}
.unify-row .label,
.lock-row .label {
    padding-left: 2px;
}
.unify-row .label:last-child {
    padding-left: 1px;
}
.unify-row .checkbox {
    background: #585858;
    color: #aaa;
}
em {
    font: italic 15px/14px "Liberation Serif", serif;
}
.fxlink {
    display: grid;
    width: 18px;
}
.fxlink > * {
    grid-area: 1 / 1;
}
.lock-row {
    grid-template-columns: 39px 20px 24px 22px 36px 35px 56px;
}
.layer-list {
    display: flex;
    justify-content: flex-end;
    flex: 1;
    background: #464646;
}
.layer-foot {
    display: grid;
    grid-template-columns: repeat(7, 27px);
    align-items: center;
    justify-items: center;
    flex: none;
    height: 19px;
    padding-left: 31px;
    border-top: 1px solid #626262;
    box-shadow: 0 -2px #383838;
    color: #858585;
}

/* 工具箱 */
.toolbox {
    position: absolute;
    left: 0;
    top: 62px;
    width: 72px;
    height: 382px;
    border: 1px solid #2a2a2a;
    border-right: 1px solid #222;
    border-radius: 3px 3px 0 0;
    background: #535353;
    color: #c6c6c6;
}
.float-head {
    display: flex;
    align-items: center;
    justify-content: flex-end;
    gap: 9px;
    height: 12px;
    padding-right: 5px;
    background: linear-gradient(#3d3d3d, #333);
    color: #bbb;
}
.toolbox .float-head {
    border-bottom: 1px solid #2c2c2c;
}
.toolbox > .grip {
    margin: 3px 0 8px 25px;
}
.tools {
    display: grid;
    grid-template-columns: 33px 33px;
    grid-auto-rows: 26px;
    padding-left: 3px;
}
.tools + .tools {
    margin-top: 1px;
    padding-top: 1px;
    border-top: 1px solid #3a3a3a;
}
.tool {
    position: relative;
    display: flex;
    align-items: center;
    padding-left: 5px;
}
.tool svg {
    width: 20px;
    height: 20px;
}
.tool::after {
    content: "";
    position: absolute;
    left: 24px;
    top: 20px;
    border: 2px solid transparent;
    border-right-color: #ddd;
    border-bottom-color: #ddd;
}
.tool.single::after {
    display: none;
}
.tool.pressed {
    width: 31px;
    height: 24px;
    margin: 1px 0 0 1px;
    padding-left: 3px;
    border: 1px solid #2a2a2a;
    border-radius: 2px;
    background: #393939;
}
.tool.pressed::after {
    left: 22px;
    top: 18px;
}
.colors {
    position: relative;
    height: 53px;
}
.fg-color,
.bg-color {
    position: absolute;
    width: 26px;
    height: 26px;
    border: 1px solid #2f2f2f;
}
.fg-color {
    left: 12px;
    top: 4px;
    background: #000;
    box-shadow: inset 0 0 0 1px #fff;
}
.bg-color {
    left: 27px;
    top: 20px;
    background: #fff;
}
.swap-color {
    position: absolute;
    left: 43px;
    top: 2px;
}
.default-color {
    position: absolute;
    left: 11px;
    top: 36px;
}

/* 动作面板 */
.actions {
    position: absolute;
    left: 1108px;
    top: 176px;
    width: 212px;
    height: 155px;
    border: 1px solid #222;
    border-radius: 4px 4px 0 0;
    background: #535353;
    color: #bdbdbd;
    box-shadow: 0 0 3px #222;
}
.actions .tabs {
    height: 18px;
}
.actions .tab {
    padding: 0 9px 0 8px;
    border-color: transparent;
    line-height: 16px;
}
.actions .tab:first-child {
    letter-spacing: 0.3px;
}
.actions .tab.active {
    padding-left: 6px;
}
.actions-body {
    display: flex;
    height: 97px;
    padding-top: 1px;
    border-bottom: 1px solid #333;
}
.action-list {
    display: flex;
    flex-direction: column;
    justify-content: flex-end;
    width: 194px;
    overflow: hidden;
}
.action {
    display: grid;
    grid-template-columns: 15px 43px 12px 118px;
    align-items: center;
    flex: none;
    height: 20px;
    padding-left: 6px;
}
.dlg {
    display: flex;
    align-items: center;
    height: 20px;
    padding-left: 4px;
    border-left: 1px solid #3a3a3a;
}
.dlg i {
    width: 13px;
    height: 12px;
    border: 1px solid #3a3a3a;
    border-left-color: #6a6a6a;
    border-top-color: #6a6a6a;
}
.dlg i.full {
    height: 11px;
    width: 12px;
    border-color: #b5b5b5;
    background: linear-gradient(#555 0 1px, #aaa 1px 2px, #707070 2px);
}
.dlg i.part {
    background:
        linear-gradient(#ddd, #ddd) 2px 5px / 6px 1px no-repeat,
        linear-gradient(#555 0 1px, #aaa 1px 2px, #606060 2px);
}
.name {
    height: 20px;
    padding-left: 5px;
    border-bottom: 1px solid #383838;
    color: #fff;
    line-height: 19px;
}
.name.selected {
    background: #566275;
}
.latin {
    margin-left: 1px;
    font-family: "Noto Sans", sans-serif;
    letter-spacing: -0.1px;
}
.action-scroll {
    display: flex;
    flex-direction: column;
    align-items: center;
    width: 16px;
    padding: 6px 0 4px;
    background: linear-gradient(90deg, #393939, #464646);
}
.action-scroll .thumb {
    width: 12px;
    height: 17px;
    margin: auto 0 10px;
    border-radius: 3px;
    background: linear-gradient(90deg, #888, #686868);
}
.actions-foot {
    display: flex;
    align-items: center;
    gap: 15px;
    height: 19px;
    padding-left: 21px;
    border-top: 1px solid #626262;
}
.actions-foot .new {
    margin-left: 2px;
}
.actions-foot .corner {
    margin: 6px 0 0 2px;
}
.actions-bottom {
    display: flex;
    justify-content: center;
    align-items: center;
    height: 7px;
    border-top: 1px solid #333;
}
.highlight {
    position: absolute;
    left: 1168px;
    top: 185px;
    width: 43px;
    height: 22px;
    border: 3px solid #f00;
}
```
FILE: script.js
```js
// 色板颜色，每行 18 个
const rows = [
    'ff0000 ffff00 00ff00 00ffff 0000ff ff00ff ffffff ededed e4e4e4 dadada d0d0d0 c8c8c8 bdbdbd b3b3b3 a9a9a9 9f9f9f e60012 fff100',
    '009944 00a0e9 1d2088 e4007f 959595 898989 7d7d7d 707070 626262 555555 464646 363636 1e1e1e 000000 f29b76 f6b37f facd89 fff799',
    'cce198 acd598 89c997 84ccc9 7ecef4 88abda 8c97cb 8f82bc aa89bd c490bf f19ec2 f29c9f ec6941 f19149 f8b551 fff45c b3d465 80c269',
    '32b16c 13b5b1 00b7ee 448aca 556fb5 5f52a0 8957a1 ae5da1 ea68a2 eb6877 e60012 eb6100 f39800 fff100 8fc31f 22ac38 009944 009e96',
    '00a0e9 0068b7 00479d 1d2088 601986 920783 e4007f e5004f a40000 a84200 ac6a00 b7aa00 638c0b 097c25 007130 00736d 0075a9 004986',
    '002e73 100964 440062 6a005f a4005b a40035 7d0000 7f2d00 834e00 8a8000 486a00 005e15 005620 005752 005982 003567 001c58 03004c',
    '32004b 500047 7e0043 7d0022 d3bfa6 a4927a 7f6b5a 5a4a40 362e2b cfa972 b28850 996c33 81511c 6a3906 30edb9 acadb3'
];

const box = document.getElementById('swatches');
rows.join(' ').split(' ').forEach((hex) => {
    const cell = document.createElement('span');
    cell.className = 'swatch';
    cell.style.background = '#' + hex;
    box.appendChild(cell);
});
```
